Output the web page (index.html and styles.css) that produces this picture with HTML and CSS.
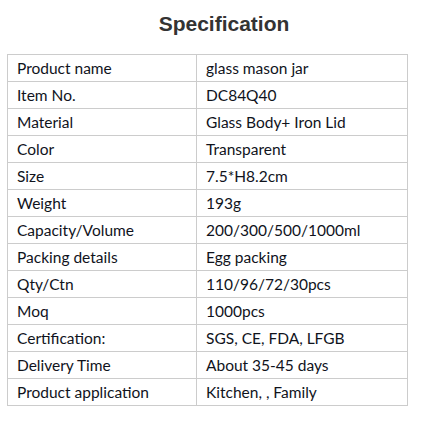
FILE: index.html
```html
<!DOCTYPE html>
<html>
<head>
<meta charset="utf-8">
<link rel="stylesheet" href="styles.css">
</head>
<body>
<div class="wrap">
  <h2 class="title">Specification</h2>
  <table class="spec">
    <tr><td class="k">Product name</td><td>glass mason jar</td></tr>
    <tr><td class="k">Item No.</td><td>DC84Q40</td></tr>
    <tr><td class="k">Material</td><td>Glass Body+ Iron Lid</td></tr>
    <tr><td class="k">Color</td><td>Transparent</td></tr>
    <tr><td class="k">Size</td><td>7.5*H8.2cm</td></tr>
    <tr><td class="k">Weight</td><td>193g</td></tr>
    <tr><td class="k">Capacity/Volume</td><td>200/300/500/1000ml</td></tr>
    <tr><td class="k">Packing details</td><td>Egg packing</td></tr>
    <tr><td class="k">Qty/Ctn</td><td>110/96/72/30pcs</td></tr>
    <tr><td class="k">Moq</td><td>1000pcs</td></tr>
    <tr><td class="k">Certification:</td><td>SGS, CE, FDA, LFGB</td></tr>
    <tr><td class="k">Delivery Time</td><td>About 35-45 days</td></tr>
    <tr><td class="k">Product application</td><td>Kitchen, , Family</td></tr>
  </table>
</div>
</body>
</html>
```
FILE: styles.css
```css
html, body { margin: 0; padding: 0; background: #fff; }
.wrap { padding: 0 0 0 7px; width: 401px; }
.title {
  margin: 0;
  padding: 12px 0 0 33px;
  height: 54px;
  box-sizing: border-box;
  font-family: "Liberation Sans", Arial, sans-serif;
  font-weight: bold;
  font-size: 21px;
  line-height: 24px;
  color: #333;
  text-align: center;
}
.spec {
  border-collapse: collapse;
  width: 401px;
  table-layout: fixed;
  font-family: Lato, "Open Sans", sans-serif;
  font-size: 15.5px;
  color: #10131c;
}
.spec td {
  border: 1px solid #cccccc;
  height: 26px;
  padding: 0 0 0 9px;
  box-sizing: border-box;
  vertical-align: middle;
  line-height: 26px;
}
.spec td.k { width: 189px; }
```
